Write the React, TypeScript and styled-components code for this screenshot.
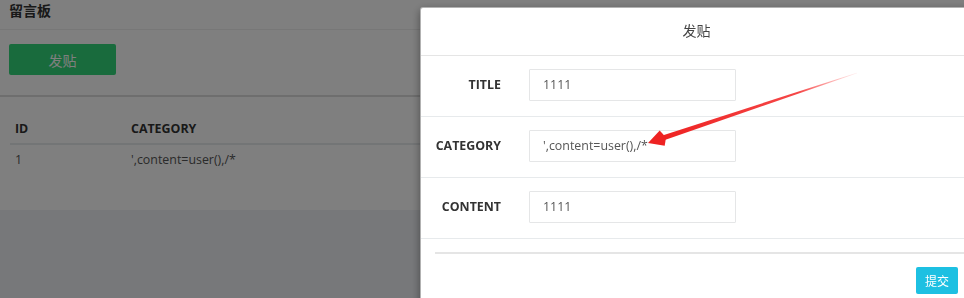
import React from "react";
import styled, { createGlobalStyle } from "styled-components";

const GlobalStyle = createGlobalStyle`
  html, body {
    margin: 0;
    padding: 0;
    height: 100%;
    overflow: hidden;
  }
  body {
    background: #eef0f4;
    font-family: "Open Sans", "Noto Sans CJK SC", sans-serif;
    font-size: 12.4px;
    color: #555;
  }
`;

const Card = styled.div`
  background: #fff;
  height: 210px;
  box-sizing: border-box;
`;

const CardTitle = styled.div`
  height: 29px;
  padding: 0 9px;
  border-bottom: 1px solid #eee;
  font-size: 14px;
  font-weight: 700;
  line-height: 22px;
  color: #333;
`;

const Toolbar = styled.div`
  padding: 14px 9px 20px;
  border-bottom: 2px solid #dcdcdc;
`;

const GreenButton = styled.button`
  display: block;
  width: 107px;
  height: 31px;
  border: none;
  border-radius: 2px;
  background: #33d77b;
  color: #fff;
  font-family: inherit;
  font-size: 14px;
`;

const Table = styled.table`
  margin: 16px 0 0 10px;
  width: calc(100% - 10px);
  border-collapse: collapse;
`;

const Th = styled.th<{ $w?: number }>`
  width: ${(p) => (p.$w ? `${p.$w}px` : "auto")};
  height: 30px;
  padding: 0 5px;
  text-align: left;
  font-weight: 700;
  color: #333;
  border-bottom: 2px solid #e7eaec;
`;

const Td = styled.td`
  height: 29px;
  padding: 0 5px;
  color: #555;
`;

const Backdrop = styled.div`
  position: fixed;
  inset: 0;
  background: rgba(0, 0, 0, 0.5);
`;

const Modal = styled.div`
  position: fixed;
  top: 7px;
  left: 420px;
  width: 551px;
  background: #fff;
  border: 1px solid rgba(0, 0, 0, 0.3);
  border-radius: 3px;
  box-shadow: 0 3px 9px rgba(0, 0, 0, 0.4);
  padding-bottom: 20px;
`;

const ModalHeader = styled.div`
  height: 47px;
  border-bottom: 1px solid #e5e5e5;
  text-align: center;
  line-height: 46px;
  font-size: 14px;
  color: #444;
`;

const FormRow = styled.div`
  display: flex;
  align-items: flex-start;
  gap: 28px;
  height: 61px;
  box-sizing: border-box;
  padding-top: 13px;
  border-bottom: 1px solid #e7eaec;
`;

const Label = styled.label`
  width: 80px;
  text-align: right;
  line-height: 32px;
  font-weight: 700;
  color: #333;
`;

const Input = styled.div`
  width: 207px;
  height: 32px;
  box-sizing: border-box;
  padding: 0 13px;
  border: 1px solid #e5e6e7;
  border-radius: 1px;
  line-height: 30px;
  color: #555;
`;

const Footer = styled.div`
  display: flex;
  justify-content: flex-end;
  margin: 13px 0 0 14px;
  padding: 13px 14px 0 0;
  border-top: 2px solid #e5e5e5;
`;

const SubmitButton = styled.button`
  width: 42px;
  height: 27px;
  border: none;
  border-radius: 2px;
  background: #1dc0e2;
  color: #fff;
  font-family: inherit;
  font-size: 12px;
  padding: 0;
`;

const ArrowLayer = styled.svg`
  position: fixed;
  inset: 0;
  width: 100%;
  height: 100%;
  pointer-events: none;
`;

const fields = [
  { label: "TITLE", value: "1111" },
  { label: "CATEGORY", value: "',content=user(),/*" },
  { label: "CONTENT", value: "1111" },
];

export default function App() {
  return (
    <>
      <GlobalStyle />
      <Card>
        <CardTitle>留言板</CardTitle>
        <Toolbar>
          <GreenButton>发贴</GreenButton>
        </Toolbar>
        <Table>
          <thead>
            <tr>
              <Th $w={106}>ID</Th>
              <Th>CATEGORY</Th>
            </tr>
          </thead>
          <tbody>
            <tr>
              <Td>1</Td>
              <Td>',content=user(),/*</Td>
            </tr>
          </tbody>
        </Table>
      </Card>
      <Backdrop />
      <Modal>
        <ModalHeader>发贴</ModalHeader>
        {fields.map((f) => (
          <FormRow key={f.label}>
            <Label>{f.label}</Label>
            <Input>{f.value}</Input>
          </FormRow>
        ))}
        <Footer>
          <SubmitButton>提交</SubmitButton>
        </Footer>
      </Modal>
      <ArrowLayer viewBox="0 0 964 298">
        <defs>
          <linearGradient id="shaft" x1="857" y1="73" x2="664" y2="138" gradientUnits="userSpaceOnUse">
            <stop offset="0" stopColor="#ff5a5a" stopOpacity="0.1" />
            <stop offset="0.3" stopColor="#f43333" stopOpacity="0.9" />
            <stop offset="1" stopColor="#ee2222" />
          </linearGradient>
        </defs>
        <polygon points="664.8,140 857.1,73.3 856.9,72.7 663.2,135.2" fill="url(#shaft)" />
        <polygon points="648,143 659.7,130.6 666,137.5 664.7,145.8" fill="#ee2222" />
      </ArrowLayer>
    </>
  );
}
